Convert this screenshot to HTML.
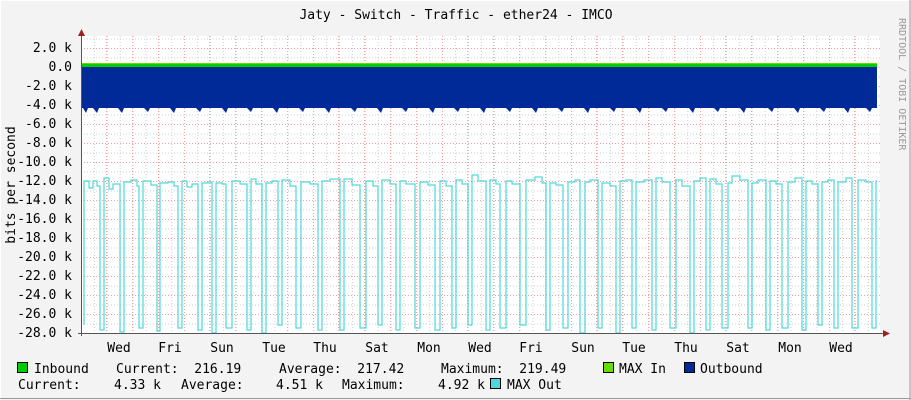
<!DOCTYPE html>
<html><head><meta charset="utf-8"><style>
html,body{margin:0;padding:0;background:#f3f3f3}
svg{display:block;font-family:"DejaVu Sans Mono","Liberation Mono",monospace}
text{white-space:pre}
</style></head><body>
<svg width="911" height="400" viewBox="0 0 911 400" xmlns="http://www.w3.org/2000/svg">
<defs>
<pattern id="vg" x="81" y="0" width="12.9" height="400" patternUnits="userSpaceOnUse">
<line x1="0.5" y1="0" x2="0.5" y2="400" stroke="#cfcfcf" stroke-dasharray="1,2"/>
</pattern>
<pattern id="hg" x="0" y="67" width="911" height="9.5" patternUnits="userSpaceOnUse">
<line x1="0" y1="0.5" x2="911" y2="0.5" stroke="#cfcfcf" stroke-dasharray="1,2"/>
</pattern>
</defs>
<rect width="911" height="400" fill="#f3f3f3"/>
<line x1="0" y1="0.5" x2="911" y2="0.5" stroke="#fff"/>
<line x1="0.5" y1="0" x2="0.5" y2="400" stroke="#fff"/>
<line x1="0" y1="398.5" x2="911" y2="398.5" stroke="#999"/>
<line x1="910" y1="0" x2="910" y2="400" stroke="#999"/>
<text x="456" y="19" font-size="13" text-anchor="middle" fill="#000">Jaty - Switch - Traffic - ether24 - IMCO</text>
<text transform="translate(899,18) rotate(90)" font-size="10" fill="#999">RRDTOOL / TOBI OETIKER</text>
<text transform="translate(15,185) rotate(-90)" font-size="13" text-anchor="middle" fill="#000">bits per second</text>
<rect x="81" y="36" width="799" height="297" fill="#fff"/>
<rect x="81" y="36" width="799" height="297" fill="url(#vg)"/>
<rect x="81" y="36" width="799" height="297" fill="url(#hg)"/>
<g stroke="#f4a0a0" stroke-dasharray="1,2">
<line x1="106.5" y1="36" x2="106.5" y2="333"/><line x1="132.5" y1="36" x2="132.5" y2="333"/><line x1="158.5" y1="36" x2="158.5" y2="333"/><line x1="184.5" y1="36" x2="184.5" y2="333"/><line x1="209.5" y1="36" x2="209.5" y2="333"/><line x1="235.5" y1="36" x2="235.5" y2="333"/><line x1="261.5" y1="36" x2="261.5" y2="333"/><line x1="287.5" y1="36" x2="287.5" y2="333"/><line x1="313.5" y1="36" x2="313.5" y2="333"/><line x1="338.5" y1="36" x2="338.5" y2="333"/><line x1="364.5" y1="36" x2="364.5" y2="333"/><line x1="390.5" y1="36" x2="390.5" y2="333"/><line x1="416.5" y1="36" x2="416.5" y2="333"/><line x1="442.5" y1="36" x2="442.5" y2="333"/><line x1="467.5" y1="36" x2="467.5" y2="333"/><line x1="493.5" y1="36" x2="493.5" y2="333"/><line x1="519.5" y1="36" x2="519.5" y2="333"/><line x1="545.5" y1="36" x2="545.5" y2="333"/><line x1="571.5" y1="36" x2="571.5" y2="333"/><line x1="596.5" y1="36" x2="596.5" y2="333"/><line x1="622.5" y1="36" x2="622.5" y2="333"/><line x1="648.5" y1="36" x2="648.5" y2="333"/><line x1="674.5" y1="36" x2="674.5" y2="333"/><line x1="700.5" y1="36" x2="700.5" y2="333"/><line x1="725.5" y1="36" x2="725.5" y2="333"/><line x1="751.5" y1="36" x2="751.5" y2="333"/><line x1="777.5" y1="36" x2="777.5" y2="333"/><line x1="803.5" y1="36" x2="803.5" y2="333"/><line x1="829.5" y1="36" x2="829.5" y2="333"/><line x1="854.5" y1="36" x2="854.5" y2="333"/>
<line x1="81" y1="48.5" x2="880" y2="48.5"/><line x1="81" y1="86.5" x2="880" y2="86.5"/><line x1="81" y1="105.5" x2="880" y2="105.5"/><line x1="81" y1="124.5" x2="880" y2="124.5"/><line x1="81" y1="143.5" x2="880" y2="143.5"/><line x1="81" y1="162.5" x2="880" y2="162.5"/><line x1="81" y1="181.5" x2="880" y2="181.5"/><line x1="81" y1="200.5" x2="880" y2="200.5"/><line x1="81" y1="219.5" x2="880" y2="219.5"/><line x1="81" y1="238.5" x2="880" y2="238.5"/><line x1="81" y1="257.5" x2="880" y2="257.5"/><line x1="81" y1="276.5" x2="880" y2="276.5"/><line x1="81" y1="295.5" x2="880" y2="295.5"/><line x1="81" y1="314.5" x2="880" y2="314.5"/>
</g>
<path d="M81,67 H877 V108 L872,108 870,112 866,108 850,108 848,113 844,108 826,108 824,112 820,108 800,108 798,113 794,108 774,108 772,112 768,108 746,108 744,113 740,108 720,108 718,112 714,108 695,108 693,113 689,108 668,108 666,112 662,108 642,108 640,113 636,108 616,108 614,112 610,108 590,108 588,113 584,108 564,108 562,112 558,108 538,108 536,113 532,108 512,108 510,112 506,108 486,108 484,113 480,108 460,108 458,112 454,108 435,108 433,113 429,108 408,108 406,112 402,108 383,108 381,113 377,108 357,108 355,112 351,108 331,108 329,113 325,108 305,108 303,112 299,108 279,108 277,113 273,108 253,108 251,112 247,108 228,108 226,113 222,108 202,108 200,112 196,108 176,108 174,113 170,108 150,108 148,112 144,108 124,108 122,113 118,108 99,108 97,113 93,108 88,108 86,113 83,108 81,108 Z" fill="#002a97"/>
<rect x="81" y="64" width="796" height="3" fill="#00cc00"/>
<rect x="81" y="63" width="796" height="1" fill="#66dd00"/>
<path d="M84,325 V181 H89 V188 H93 V181 H97 V186 H100 V330 H104 V178 H109 V189 H113 V184 H120 V332 H124 V182 H131 V180 H137 V186 H139 V328 H143 V181 H151 V185 H157 V331 H160 V183 H168 V182 H174 V186 H178 V328 H182 V181 H187 V187 H192 V184 H198 V330 H202 V183 H208 V182 H212 V333 H216 V183 H222 V184 H226 V328 H232 V181 H240 V184 H247 V330 H251 V179 H256 V184 H262 V333 H266 V183 H272 V181 H278 V325 H282 V180 H290 V186 H296 V328 H301 V182 H310 V184 H318 V330 H322 V181 H330 V179 H340 V330 H344 V179 H352 V185 H360 V328 H366 V181 H373 V186 H378 V325 H382 V180 H390 V184 H396 V330 H400 V181 H406 V184 H415 V328 H420 V182 H428 V185 H435 V330 H440 V181 H446 V186 H452 V328 H456 V180 H462 V184 H468 V325 H472 V175 H478 V181 H486 V330 H490 V180 H496 V184 H500 V328 H506 V181 H512 V184 H520 V325 H526 V180 H535 V177 H542 V183 H546 V330 H550 V183 H556 V185 H563 V328 H568 V182 H575 V180 H580 V333 H585 V182 H590 V180 H598 V328 H602 V183 H610 V186 H616 V333 H620 V181 H626 V180 H632 V328 H636 V182 H644 V180 H652 V330 H656 V178 H662 V182 H670 V328 H676 V180 H682 V186 H690 V333 H694 V181 H700 V178 H706 V330 H710 V179 H716 V184 H722 V328 H728 V183 H732 V176 H740 V180 H748 V328 H752 V183 H758 V180 H766 V330 H770 V181 H776 V184 H782 V328 H788 V182 H795 V178 H802 V330 H806 V181 H812 V184 H818 V325 H822 V182 H828 V180 H834 V328 H838 V182 H846 V178 H852 V328 H858 V180 H866 V182 H872 V328 H876 V181 H877" fill="none" stroke="#4dd9d9" stroke-width="1.2"/>
<line x1="81.5" y1="30" x2="81.5" y2="336" stroke="#555"/>
<line x1="78" y1="333.5" x2="885" y2="333.5" stroke="#555"/>
<path d="M78,36 L81.5,29 L85,36 Z" fill="#a02020"/>
<path d="M883,330 L890,333.5 L883,337 Z" fill="#a02020"/>
<g font-size="13" fill="#000" text-anchor="end">
<text x="72" y="52">2.0 k</text><text x="72" y="71">0.0</text><text x="72" y="90">-2.0 k</text><text x="72" y="109">-4.0 k</text><text x="72" y="128">-6.0 k</text><text x="72" y="147">-8.0 k</text><text x="72" y="166">-10.0 k</text><text x="72" y="185">-12.0 k</text><text x="72" y="204">-14.0 k</text><text x="72" y="223">-16.0 k</text><text x="72" y="242">-18.0 k</text><text x="72" y="261">-20.0 k</text><text x="72" y="280">-22.0 k</text><text x="72" y="299">-24.0 k</text><text x="72" y="318">-26.0 k</text><text x="72" y="337">-28.0 k</text>
</g>
<g font-size="13" fill="#000" text-anchor="middle">
<text x="119" y="352">Wed</text><text x="170" y="352">Fri</text><text x="222" y="352">Sun</text><text x="274" y="352">Tue</text><text x="325" y="352">Thu</text><text x="377" y="352">Sat</text><text x="429" y="352">Mon</text><text x="480" y="352">Wed</text><text x="531" y="352">Fri</text><text x="583" y="352">Sun</text><text x="634" y="352">Tue</text><text x="686" y="352">Thu</text><text x="738" y="352">Sat</text><text x="790" y="352">Mon</text><text x="841" y="352">Wed</text>
</g>
<g font-size="13" fill="#000">
<rect x="17.5" y="362.5" width="10" height="10" fill="#00cc00" stroke="#000"/>
<text x="34" y="373">Inbound</text>
<text x="116" y="373">Current:  216.19</text>
<text x="279" y="373">Average:  217.42</text>
<text x="441" y="373">Maximum:  219.49</text>
<rect x="603.5" y="362.5" width="10" height="10" fill="#66dd00" stroke="#000"/>
<text x="619" y="373">MAX In</text>
<rect x="684.5" y="362.5" width="10" height="10" fill="#002a97" stroke="#000"/>
<text x="700" y="373">Outbound</text>
<text x="18" y="389">Current:</text>
<text x="114" y="389">4.33 k</text>
<text x="181" y="389">Average:</text>
<text x="276" y="389">4.51 k</text>
<text x="342" y="389">Maximum:</text>
<text x="438" y="389">4.92 k</text>
<rect x="490.5" y="378.5" width="10" height="10" fill="#4dd9d9" stroke="#000"/>
<text x="507" y="389">MAX Out</text>
</g>
</svg>
</body></html>
